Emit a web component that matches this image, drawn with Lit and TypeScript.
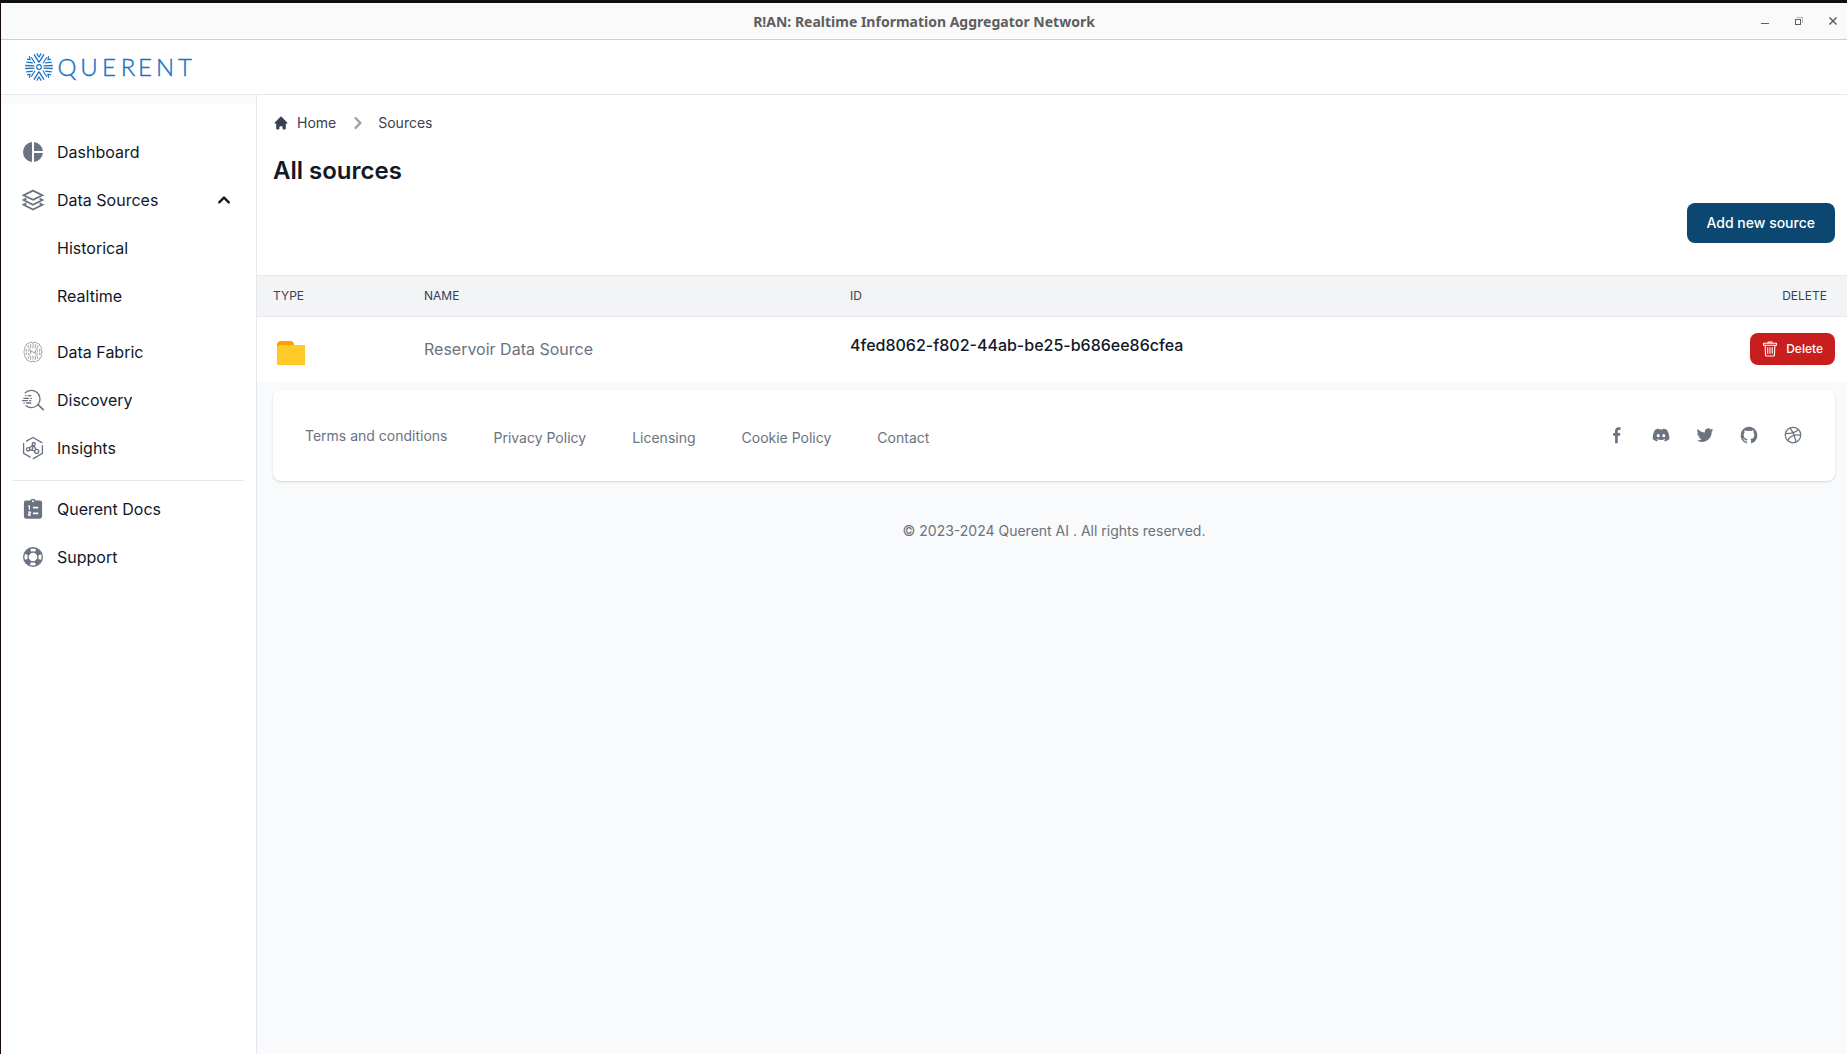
import { LitElement, html, css, svg, nothing } from "lit";
import { customElement, state } from "lit/decorators.js";

const pieIcon = svg`<path fill="currentColor" d="M11 2.05v19.9A10 10 0 0 1 11 2.05z"/><path fill="currentColor" d="M13 2.05V11h8.95A10 10 0 0 0 13 2.05z"/><path fill="currentColor" d="M13 13v8.95A10 10 0 0 0 21.95 13z"/>`;

const layersIcon = svg`<g fill="none" stroke="currentColor" stroke-width="1.800"><path d="M12 2.600 21.400 7.200 12 11.800 2.600 7.200z"/><path d="M5.400 10.600 2.600 12 12 16.700l9.400-4.700-2.800-1.400"/><path d="M5.400 15.400 2.600 16.800 12 21.500l9.400-4.700-2.800-1.400"/></g>`;

const brainIcon = svg`<g fill="none" stroke="currentColor" stroke-width=".650" stroke-linecap="round"><path d="M12 3.200c-.8-1.400-3.300-1.300-4.100.2-1.700-.1-3 1.100-2.700 2.600C3.600 6.600 3 8.400 3.900 9.700c-1.300 1.100-1.300 3.500 0 4.600-.9 1.300-.3 3.100 1.300 3.700-.3 1.500 1 2.700 2.700 2.600.8 1.500 3.300 1.600 4.100.2.800 1.400 3.300 1.300 4.100-.2 1.700.1 3-1.100 2.700-2.600 1.600-.6 2.200-2.400 1.300-3.700 1.300-1.100 1.300-3.500 0-4.600.9-1.300.3-3.100-1.300-3.700.3-1.500-1-2.700-2.700-2.600-.8-1.500-3.300-1.600-4.100-.2z"/><path d="M9.700 4.500v3L7.800 9v2.500M7.300 5.600v2M9.700 10.200v3.600M7.800 13v2l1.900 1.500v3M5.300 9.300v2M5.300 12.700v2M14.300 4.500v3L16.200 9v2.500M16.700 5.600v2M14.300 10.200v3.600M16.200 13v2l-1.900 1.500v3M18.700 9.300v2M18.700 12.700v2M9.700 11l4.600 2M12 4.800v3.400M12 15.800v3.400M7.300 16.700v1.800M16.700 16.700v1.800"/></g>`;

const searchIcon = svg`<g fill="none" stroke="currentColor" stroke-width="1.300" stroke-linecap="round"><path d="M4.100 4.900A8.700 8.700 0 1 1 4.900 17.800"/><path d="m17 16.500 5.200 5.200" stroke-width="1.700"/><path d="M4.600 7.700h.4M7.200 7.700h2.600M2.800 10.300h4.700M9.800 10.300h.6M1.500 12.600h5M8.600 12.600h1.200M3 15h.2M5.500 15h4.300"/></g>`;

const insightsIcon = svg`<g fill="none" stroke="currentColor" stroke-width="1.300" stroke-linecap="round" stroke-linejoin="round"><path d="M5.400 5.100 12 1.500 20.900 6.600M21.400 9.600V17.400L12.200 22.600M9.300 21.100 2.600 17.400V7.300"/><circle cx="12.700" cy="8" r="1.500"/><circle cx="7.200" cy="13.300" r="1.700"/><circle cx="15.700" cy="15.400" r="2"/><path d="m11.700 9.200-3.300 2.900M13.100 9.600l1.700 3.900M9 13.800l4.700 1M12.400 9.600l-1.400 4.600"/></g>`;

const docsIcon = svg`<path fill="currentColor" fill-rule="evenodd" d="M9.200 3.600A3 3 0 0 1 12 1.700a3 3 0 0 1 2.800 1.900H19a2.100 2.100 0 0 1 2.100 2.100v13.900A2.100 2.100 0 0 1 19 21.700H5a2.100 2.100 0 0 1-2.100-2.100V5.700A2.100 2.100 0 0 1 5 3.600zM12 3.300a1 1 0 1 0 0 2 1 1 0 0 0 0-2zM12 9.700v1.800h5.200V9.700zM12 15.500v1.800h5.200v-1.800z"/><path fill="none" stroke="#fff" stroke-width="1.200" d="M7 9h1.400v3.800M7 15.100h2.500v.9l-2 1.300v.8H10"/>`;

const supportIcon = svg`<circle cx="12" cy="12" r="9.300" fill="none" stroke="currentColor" stroke-width="1.400"/><circle cx="12" cy="12" r="6.700" fill="none" stroke="currentColor" stroke-width="4.500" stroke-dasharray="5.800 4.720" stroke-dashoffset="-2.360"/><circle cx="12" cy="12" r="5" fill="none" stroke="currentColor" stroke-width="1.300"/>`;

const chevronUp = svg`<path fill="currentColor" fill-rule="evenodd" d="M14.700 12.700a1 1 0 0 1-1.400 0L10 9.400l-3.300 3.300a1 1 0 0 1-1.400-1.400l4-4a1 1 0 0 1 1.400 0l4 4a1 1 0 0 1 0 1.400z"/>`;

const homeIcon = svg`<path fill="currentColor" d="M10.707 2.293a1 1 0 0 0-1.414 0l-7 7a1 1 0 0 0 1.414 1.414L4 10.414V17a1 1 0 0 0 1 1h2a1 1 0 0 0 1-1v-2a1 1 0 0 1 1-1h2a1 1 0 0 1 1 1v2a1 1 0 0 0 1 1h2a1 1 0 0 0 1-1v-6.586l.293.293a1 1 0 0 0 1.414-1.414l-7-7z"/>`;

const chevronRight = svg`<path fill="currentColor" fill-rule="evenodd" d="M7.293 14.707a1 1 0 0 1 0-1.414L10.586 10 7.293 6.707a1 1 0 0 1 1.414-1.414l4 4a1 1 0 0 1 0 1.414l-4 4a1 1 0 0 1-1.414 0z"/>`;

const trashIcon = svg`<g fill="none" stroke="currentColor" stroke-width="1.600" stroke-linejoin="round"><path d="M2.300 3.400h19.400v2.900H2.300zM9 3.400V1.500h6v1.900M4.700 6.300l.6 14.900c0 .8.600 1.300 1.400 1.300h10.600c.8 0 1.400-.5 1.400-1.300l.6-14.900"/><path d="M8.600 9.500v9.800M12 9.500v9.800M15.400 9.500v9.800"/></g>`;

const social: { name: string; art: unknown }[] = [
  { name: "Facebook", art: svg`<path fill="currentColor" d="M12.900 21.900v-8.900h2.700l.4-3.400h-3.100V7.500c0-1 .3-1.600 1.700-1.600h1.600V2.900c-.3 0-1.300-.1-2.400-.1-2.500 0-4.100 1.400-4.100 4.200v2.600H7.400V13h2.300v8.900z"/>` },
  { name: "Discord", art: svg`<path fill="currentColor" d="M18.942 5.556a16.300 16.300 0 0 0-4.126-1.300 12.040 12.040 0 0 0-.529 1.100 15.175 15.175 0 0 0-4.573 0 11.586 11.586 0 0 0-.535-1.100 16.274 16.274 0 0 0-4.129 1.300 17.392 17.392 0 0 0-2.868 11.662 15.785 15.785 0 0 0 4.963 2.521c.410-.564.773-1.160 1.084-1.785a10.638 10.638 0 0 1-1.706-.830c.143-.106.283-.217.418-.331a11.664 11.664 0 0 0 10.118 0c.137.114.277.225.418.331-.544.328-1.116.606-1.710.832a12.580 12.580 0 0 0 1.084 1.785 16.460 16.460 0 0 0 5.064-2.595 17.286 17.286 0 0 0-2.973-11.590zM8.678 14.813a1.940 1.940 0 0 1-1.800-2.045 1.930 1.930 0 0 1 1.800-2.047 1.918 1.918 0 0 1 1.800 2.047 1.929 1.929 0 0 1-1.800 2.045zm6.644 0a1.940 1.940 0 0 1-1.800-2.045 1.930 1.930 0 0 1 1.800-2.047 1.919 1.919 0 0 1 1.800 2.047 1.930 1.930 0 0 1-1.800 2.045z"/>` },
  { name: "Twitter", art: svg`<path fill="currentColor" d="M22 5.900a8.400 8.400 0 0 1-2.400.6 4.200 4.200 0 0 0 1.800-2.200 8.200 8.200 0 0 1-2.600 1 4.100 4.100 0 0 0-7 3.700A11.700 11.700 0 0 1 3.400 4.700a4.100 4.100 0 0 0 1.300 5.500 4 4 0 0 1-1.900-.5v.1a4.100 4.100 0 0 0 3.300 4 4 4 0 0 1-1.900.1 4.100 4.100 0 0 0 3.900 2.800A8.300 8.300 0 0 1 2 18.400a11.700 11.700 0 0 0 6.300 1.900c7.500 0 11.700-6.300 11.700-11.700v-.5a8.400 8.400 0 0 0 2-2.200z"/>` },
  { name: "GitHub", art: svg`<path fill="currentColor" fill-rule="evenodd" d="M12.006 2a9.847 9.847 0 0 0-6.484 2.440 10.320 10.320 0 0 0-3.393 6.170 10.480 10.480 0 0 0 1.317 6.955 10.045 10.045 0 0 0 5.400 4.418c.504.095.683-.223.683-.494 0-.245-.010-1.052-.014-1.908-2.780.620-3.366-1.210-3.366-1.210a2.711 2.711 0 0 0-1.110-1.500c-.907-.637.070-.621.070-.621.317.044.620.163.885.346.266.183.487.426.647.710.135.253.318.476.538.655a2.079 2.079 0 0 0 2.370.196c.045-.520.270-1.006.635-1.370-2.219-.259-4.554-1.138-4.554-5.070a4.022 4.022 0 0 1 1.031-2.750 3.770 3.770 0 0 1 .096-2.713s.839-.275 2.749 1.050a9.260 9.260 0 0 1 5.004 0c1.906-1.325 2.740-1.050 2.740-1.050.370.858.406 1.828.101 2.713a4.017 4.017 0 0 1 1.029 2.750c0 3.939-2.339 4.805-4.564 5.058a2.471 2.471 0 0 1 .679 1.897c0 1.372-.012 2.477-.012 2.814 0 .272.180.592.687.492a10.050 10.050 0 0 0 5.388-4.421 10.473 10.473 0 0 0 1.313-6.948 10.320 10.320 0 0 0-3.390-6.165A9.847 9.847 0 0 0 12.007 2z"/>` },
  { name: "Dribbble", art: svg`<g fill="none" stroke="currentColor" stroke-width="1.500"><circle cx="12" cy="12" r="9.300"/><path d="M8.300 3.500c3.400 4.300 6 9.500 7.200 17M3 10.300c6 .1 11.800-.8 15.700-4.900M5.500 18.700c3.200-5.500 8.500-7.800 15.800-6.300"/></g>` },
];

// Upper-left quadrant of the burst mark, mirrored into the other three.
const burst = svg`<path stroke-width="1.400" d="M-13.800-1.500-4.600-1.100M0-4.600-5-12.600"/><path d="M-12.800-4.800-6.200-4.200M-4-3.800-7.800-9.800M0-9.800-2.200-13.600M-12-7.800-9-7.200-9.600-10.800"/>`;

const letters: [string, number][] = [["Q", 42], ["U", 64], ["E", 84], ["R", 103], ["E", 120], ["N", 140], ["T", 160]];

@customElement("app-root")
export class AppRoot extends LitElement {
  @state() private open = true;

  static styles = css`
    :host {
      display: block;
      font-family: Inter, "Liberation Sans", sans-serif;
      color: #111827;
      background: #f9fafb;
      border-left: 1px solid #17070f;
      border-top: 3px solid #0f0f0f;
    }
    * { box-sizing: border-box; }
    h1, p, ul { margin: 0; padding: 0; }
    ul { list-style: none; }
    a { color: inherit; text-decoration: none; }
    button { font: inherit; border: 0; cursor: pointer; background: none; color: inherit; padding: 0; }
    svg { display: block; flex: none; }
    .window { display: flex; flex-direction: column; min-height: calc(100vh - 3px); }

    .titlebar {
      display: grid; grid-template-columns: 1fr auto 1fr; align-items: center;
      height: 37px; background: #fafafa; border-bottom: 1px solid #cfcfcf; color: #5e5e5e;
    }
    .titlebar strong { grid-column: 2; padding-top: 2px; font: 700 14px/20px "Noto Sans", "Open Sans", sans-serif; }
    .controls { display: flex; justify-content: flex-end; gap: 18px; padding-right: 6px; }
    .header {
      display: flex; align-items: center; height: 55px; padding: 0 24px;
      background: #fff; border-bottom: 1px solid #e5e7eb;
    }
    .brand { display: flex; color: #1a73c4; }
    .wordmark { font-family: Lato, sans-serif; font-weight: 300; stroke: currentColor; stroke-width: 0.4; }
    .shell { display: flex; flex: 1; }

    .sidebar { width: 256px; flex: none; border-right: 1px solid #e5e7eb; padding-top: 9px; display: flex; }
    .nav { flex: 1; background: #fff; padding: 28px 12px; }
    .list { display: grid; gap: 8px; }
    .item {
      display: flex; align-items: center; gap: 12px; width: 100%; height: 40px; padding: 8px;
      font-size: 16px; line-height: 24px; text-align: left;
    }
    .item svg { color: #6b7280; }
    .item .caret { margin-left: auto; color: #111827; }
    .child { padding-left: 44px; }
    .sub { padding-bottom: 8px; }
    .second { border-top: 1px solid #e5e7eb; margin-top: 12px; padding-top: 8px; }

    .main { flex: 1; min-width: 0; }
    .intro { background: #fff; padding: 16px 12px 32px 16px; display: flex; flex-direction: column; }
    .crumbs { display: flex; align-items: center; font-size: 14px; line-height: 24px; color: #374151; }
    .crumbs a { display: flex; align-items: center; gap: 8px; }
    .crumbs .sep { color: #9ca3af; margin: 0 8px 0 10px; }
    h1 { font-size: 24px; line-height: 32px; font-weight: 600; margin: 20px 0 16px; }
    .primary {
      align-self: flex-end; height: 40px; padding: 0 20px; border-radius: 8px;
      background: #0b4770; color: #fff; font-size: 14px; font-weight: 500; line-height: 20px;
    }

    table { width: 100%; border-collapse: collapse; table-layout: fixed; background: #fff; }
    thead { background: #f3f4f6; color: #374151; }
    th {
      height: 41px; padding: 0; text-align: left; font-size: 12px; line-height: 16px; font-weight: 400;
      text-transform: uppercase; border-top: 1px solid #e5e7eb; border-bottom: 1px solid #e5e7eb;
    }
    td { height: 65px; padding: 0; vertical-align: middle; font-size: 16px; line-height: 24px; }
    .c-type { width: 167px; }
    .c-name { width: 426px; }
    .c-del { width: 140px; }
    .type { padding-left: 16px; }
    th.del { text-align: right; padding-right: 20px; }
    td.del { padding-right: 12px; }
    td.del button {
      display: flex; align-items: center; gap: 8px; margin-left: auto; height: 32px; padding: 0 12px;
      border-radius: 8px; background: #c81e1e; color: #fff; font-size: 12px; font-weight: 500; line-height: 16px;
    }
    td.name { color: #6b7280; }
    td.id { font-weight: 500; padding-bottom: 8px; color: #111827; }

    .footer {
      display: flex; align-items: center; justify-content: space-between; margin: 8px 12px 0 16px;
      padding: 32px; height: 91px; background: #fff; border-radius: 8px;
      box-shadow: 0 1px 3px rgba(0, 0, 0, 0.1), 0 1px 2px rgba(0, 0, 0, 0.06);
      font-size: 14px; line-height: 20px; color: #6b7280;
    }
    .links { display: flex; align-items: center; gap: 46px; padding-top: 2px; }
    .links li + li { padding-top: 4px; }
    .social { display: flex; gap: 24px; padding-bottom: 1px; }
    .copy { padding: 40px 12px 0 16px; text-align: center; font-size: 14px; line-height: 20px; color: #6b7280; }
  `;

  private icon(art: unknown, size = 24, cls = "", box = 24) {
    return html`<svg class=${cls} width=${size} height=${size} viewBox="0 0 ${box} ${box}" aria-hidden="true">${art}</svg>`;
  }

  private item(label: string, art: unknown) {
    return html`<li><a class="item" href="#">${this.icon(art)}<span>${label}</span></a></li>`;
  }

  render() {
    return html`
      <div class="window">
        <div class="titlebar">
          <strong>R!AN: Realtime Information Aggregator Network</strong>
          <div class="controls">
            <button aria-label="Minimize"><svg width="16" height="16"><path d="M4 10.500h8" stroke="#5e5e5e"/></svg></button>
            <button aria-label="Restore"><svg width="16" height="16" fill="none"><path d="M6 4.500h5.500V10" stroke="#b5b5b5"/><rect x="4.500" y="6.500" width="5" height="5" stroke="#5e5e5e"/></svg></button>
            <button aria-label="Close"><svg width="16" height="16"><path d="m4.500 4.500 7 7m0-7-7 7" stroke="#5e5e5e" stroke-width="1.500"/></svg></button>
          </div>
        </div>

        <header class="header">
          <a class="brand" href="#" aria-label="Querent home">
            <svg width="172" height="30" viewBox="0 0 172 30">
              <g transform="translate(14 15)" fill="none" stroke="currentColor" stroke-width="1.200">
                <circle r="2.300"/>
                ${["1 1", "-1 1", "1 -1", "-1 -1"].map((s) => svg`<g transform="scale(${s})">${burst}</g>`)}
              </g>
              <g class="wordmark" fill="currentColor" font-size="24" text-anchor="middle">
                ${letters.map(([c, x]) => svg`<text x=${x} y="24">${c}</text>`)}
              </g>
            </svg>
          </a>
        </header>

        <div class="shell">
          <aside class="sidebar">
            <nav class="nav" aria-label="Main">
              <ul class="list">
                ${this.item("Dashboard", pieIcon)}
                <li>
                  <button class="item" aria-expanded=${this.open} @click=${() => (this.open = !this.open)}>
                    ${this.icon(layersIcon)}<span>Data Sources</span>${this.icon(chevronUp, 24, "caret", 20)}
                  </button>
                </li>
                ${this.open
                  ? html`<li class="sub"><ul class="list">
                      <li><a class="item child" href="#">Historical</a></li>
                      <li><a class="item child" href="#">Realtime</a></li>
                    </ul></li>`
                  : nothing}
                ${this.item("Data Fabric", brainIcon)}
                ${this.item("Discovery", searchIcon)}
                ${this.item("Insights", insightsIcon)}
              </ul>
              <ul class="list second">
                ${this.item("Querent Docs", docsIcon)}
                ${this.item("Support", supportIcon)}
              </ul>
            </nav>
          </aside>

          <main class="main">
            <section class="intro">
              <nav class="crumbs" aria-label="Breadcrumb">
                <a href="#">${this.icon(homeIcon, 16, "", 20)}<span>Home</span></a>
                ${this.icon(chevronRight, 24, "sep", 20)}
                <a href="#">Sources</a>
              </nav>
              <h1>All sources</h1>
              <button class="primary">Add new source</button>
            </section>

            <table>
              <colgroup><col class="c-type" /><col class="c-name" /><col /><col class="c-del" /></colgroup>
              <thead>
                <tr><th class="type">Type</th><th>Name</th><th>ID</th><th class="del">Delete</th></tr>
              </thead>
              <tbody>
                <tr>
                  <td class="type">
                    <svg width="36" height="36" viewBox="0 0 36 36" role="img" aria-label="Folder">
                      <path fill="#ffa000" d="M4 18V14a4 4 0 0 1 4-4h9a4 4 0 0 1 4 4v4z"/>
                      <path fill="#ffca28" d="M4 18a4 4 0 0 1 4-4h24v20H4z"/>
                    </svg>
                  </td>
                  <td class="name">Reservoir Data Source</td>
                  <td class="id">4fed8062-f802-44ab-be25-b686ee86cfea</td>
                  <td class="del"><button>${this.icon(trashIcon, 16)}Delete</button></td>
                </tr>
              </tbody>
            </table>

            <footer>
              <div class="footer">
                <ul class="links">
                  ${["Terms and conditions", "Privacy Policy", "Licensing", "Cookie Policy", "Contact"].map(
                    (t) => html`<li><a href="#">${t}</a></li>`,
                  )}
                </ul>
                <div class="social">
                  ${social.map((s) => html`<a href="#" aria-label=${s.name}>${this.icon(s.art, 20)}</a>`)}
                </div>
              </div>
              <p class="copy">© 2023-2024 Querent AI . All rights reserved.</p>
            </footer>
          </main>
        </div>
      </div>
    `;
  }
}
